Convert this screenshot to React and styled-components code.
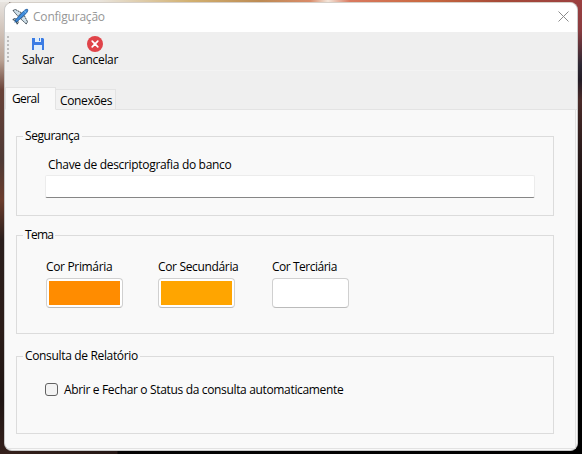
import React from 'react';
import styled, { createGlobalStyle } from 'styled-components';

const Global = createGlobalStyle`
  * { box-sizing: border-box; }
  body { margin: 0; font-family: "Open Sans", "Noto Sans", sans-serif; font-size: 12px; line-height: 16px; color: #000; overflow: hidden; }
`;

const Desktop = styled.div`
  width: 582px;
  height: 454px;
  padding: 2px 4px 4px;
  background:
    linear-gradient(90deg, #efedea 0, #e9e4dc 100px, #d2b070 190px, #bd8b54 260px, #d98a68 310px, #f3e6da 328px, #d9795f 350px, #c8683f 430px, #a64a38 500px, #9c4040 582px) 0 0 / 582px 2px no-repeat,
    linear-gradient(180deg, #e9e6e2 0, #b9a294 60px, #6a4238 90px, #4e3a35 160px, #6b3c2c 200px, #2a1e1c 240px, #2b1c18 330px, #1f1513 400px, #35211c 454px) 0 0 / 9px 454px no-repeat,
    linear-gradient(180deg, #9c4040 0, #8a3c40 30px, #2c2733 65px, #231c26 80px, #4a2a28 100px, #2b1b1b 150px, #000 240px) 571px 0 / 11px 454px no-repeat,
    linear-gradient(90deg, #35211c 0, #241714 117px, #050404 118px, #000 100%);
`;

const Window = styled.main`
  width: 574px;
  height: 449px;
  border: 1px solid #c9c9c9;
  border-top-color: #d5cfc8;
  border-radius: 8px;
  background: #f9f9f9;
  overflow: hidden;
  display: flex;
  flex-direction: column;
`;

const TitleBar = styled.header`
  height: 29px;
  flex: none;
  display: flex;
  align-items: center;
  gap: 4px;
  padding: 0 8px 0 7px;
  background: #fff;
  color: #969696;
  svg:last-child { margin-top: -3px; }
  svg:first-child { margin-top: -2px; }
`;

const Text = styled.span`
  white-space: nowrap;
  letter-spacing: ${(p) => p.$track ?? -0.34}px;
`;

const Title = styled(Text)`
  flex: 1;
  margin-top: -1px;
`;

const ToolBar = styled.div`
  height: 39px;
  flex: none;
  display: flex;
  background: #efefef;
  border-bottom: 1px solid #f3f3f3;
  padding: 4px 0 0 2px;
`;

const Grip = styled.div`
  width: 2px;
  height: 27px;
  margin-right: 13px;
  background: repeating-linear-gradient(180deg, #bdbdbd 0 2px, transparent 2px 4px);
`;

const ToolButton = styled.div`
  width: ${(p) => p.$width}px;
  margin-right: 18px;
  display: flex;
  flex-direction: column;
  align-items: center;
  svg { display: block; height: 16px; }
`;

const TabBar = styled.nav`
  height: 39px;
  flex: none;
  display: flex;
  align-items: flex-end;
  background: #efefef;
  box-shadow: inset 0 -1px #e3e3e3;
`;

const Tab = styled.div`
  height: ${(p) => (p.$active ? 23 : 21)}px;
  width: ${(p) => (p.$active ? 51 : 60)}px;
  padding: ${(p) => (p.$active ? '3px 0 0 6px' : '3px 0 0 4px')};
  border: 1px solid #e3e3e3;
  border-left-width: ${(p) => (p.$active ? 1 : 0)}px;
  border-bottom-color: ${(p) => (p.$active ? '#f9f9f9' : '#e3e3e3')};
  background: ${(p) => (p.$active ? '#f9f9f9' : '#f2f2f2')};
`;

const Panel = styled.section`
  flex: 1;
  margin: 0 1px 1px 0;
  border: solid #e2e2e2;
  border-width: 0 1px 1px 0;
  padding: 18px 21px 0 11px;
`;

const Group = styled.fieldset`
  width: 538px;
  height: ${(p) => p.$height}px;
  margin: 0 0 ${(p) => p.$gap || 0}px;
  border: 1px solid #dcdcdc;
  padding: 0 18px 0 28px;
`;

const Legend = styled.legend`
  margin-left: -22px;
  padding: 0 2px;
`;

const KeyField = styled.label`
  display: block;
  padding-top: 13px;
`;

const KeyLabel = styled(Text)`
  display: block;
  padding-left: 3px;
`;

const KeyInput = styled.input`
  display: block;
  width: 490px;
  height: 23px;
  margin-top: 2px;
  border: 1px solid #ececec;
  border-bottom-color: #868686;
  border-radius: 2px;
  outline: none;
  background: #fff;
`;

const Colors = styled.div`
  display: grid;
  grid-template-columns: 112px 114px 90px;
  padding: 16px 0 0 1px;
`;

const ColorField = styled.div`
  display: flex;
  flex-direction: column;
  align-items: flex-start;
  gap: 3px;
`;

const Swatch = styled.button`
  display: flex;
  width: 77px;
  height: 30px;
  padding: 2px;
  border: 1px solid #d0d0d0;
  border-bottom-color: #bbb;
  border-radius: 4px;
  background: #fff;
`;

const Fill = styled.span`
  flex: 1;
  height: 24px;
  background: ${(p) => p.$color};
`;

const CheckRow = styled.div`
  display: flex;
  align-items: center;
  gap: 6px;
  padding-top: 18px;
`;

const CheckBox = styled.span`
  width: 13px;
  height: 13px;
  margin-top: -1px;
  border: 1px solid #626262;
  border-radius: 3px;
  background: #f3f3f3;
`;

function Plane() {
  return (
    <svg width="17" height="17" viewBox="0 0 17 17">
      <path d="M1 2.6l2.2-1.2 6.3 3.4-3.4 3.6zM14.2 15.9l1.4-2-3.4-6.5-3.6 3.4z" fill="#cfe0ea" stroke="#2b3842" strokeWidth=".9" strokeDasharray="2 .6" />
      <path d="M.8 11.6l1.6-1 3.2.8-1.4 1.6zM5.2 16.2l1-1.6-.8-3-1.4 1.4z" fill="#c3d8e3" stroke="#2b3842" strokeWidth=".9" />
      <path d="M2.8 14.2l1-2.6 7.9-8.6c1.4-1.4 3.2-2 3.9-1.6.5.8-.1 2.6-1.5 4l-8.6 7.8z" fill="#3f8ddd" stroke="#1d5595" strokeWidth=".8" />
      <path d="M12.3 2.9l1.9 1.8" stroke="#9bd0f5" />
    </svg>
  );
}

function Floppy() {
  return (
    <svg width="12" height="16" viewBox="0 0 12 16">
      <path d="M0 2h11l1 1v11H0z" fill="#3b7ce4" />
      <path d="M3 2h6v4H3zM2 9h8v5H2z" fill="#dfedfb" />
      <path d="M7 2h1v3H7z" fill="#3b7ce4" />
    </svg>
  );
}

function CancelIcon() {
  return (
    <svg width="16" height="16" viewBox="0 0 16 16">
      <circle cx="8" cy="8" r="8" fill="#e04349" />
      <path d="M5.2 5.2l5.6 5.6M10.8 5.2l-5.6 5.6" stroke="#fff" strokeWidth="1.7" strokeLinecap="round" />
    </svg>
  );
}

function CloseIcon() {
  return (
    <svg width="11" height="11" viewBox="0 0 11 11">
      <path d="M.5.5l10 10M10.5.5l-10 10" stroke="#8b8b8b" />
    </svg>
  );
}

const colors = [
  { label: 'Cor Primária', color: '#ff8c00' },
  { label: 'Cor Secundária', color: '#ffa500' },
  { label: 'Cor Terciária', color: '#ffffff', track: -0.48 },
];

export default function App() {
  return (
    <>
      <Global />
      <Desktop>
        <Window>
          <TitleBar>
            <Plane />
            <Title $track={-0.2}>Configuração</Title>
            <CloseIcon />
          </TitleBar>
          <ToolBar>
            <Grip />
            <ToolButton $width={32}><Floppy /><Text>Salvar</Text></ToolButton>
            <ToolButton $width={46}><CancelIcon /><Text>Cancelar</Text></ToolButton>
          </ToolBar>
          <TabBar>
            <Tab $active><Text $track={-0.6}>Geral</Text></Tab>
            <Tab><Text>Conexões</Text></Tab>
          </TabBar>
          <Panel>
            <Group $height={88} $gap={11}>
              <Legend><Text $track={-0.45}>Segurança</Text></Legend>
              <KeyField>
                <KeyLabel $track={-0.32}>Chave de descriptografia do banco</KeyLabel>
                <KeyInput type="text" />
              </KeyField>
            </Group>
            <Group $height={107} $gap={14}>
              <Legend><Text $track={-0.7}>Tema</Text></Legend>
              <Colors>
                {colors.map((c) => (
                  <ColorField key={c.label}>
                    <Text $track={c.track}>{c.label}</Text>
                    <Swatch aria-label={c.label}><Fill $color={c.color} /></Swatch>
                  </ColorField>
                ))}
              </Colors>
            </Group>
            <Group $height={86}>
              <Legend><Text>Consulta de Relatório</Text></Legend>
              <CheckRow>
                <CheckBox />
                <Text>Abrir e Fechar o Status da consulta automaticamente</Text>
              </CheckRow>
            </Group>
          </Panel>
        </Window>
      </Desktop>
    </>
  );
}
